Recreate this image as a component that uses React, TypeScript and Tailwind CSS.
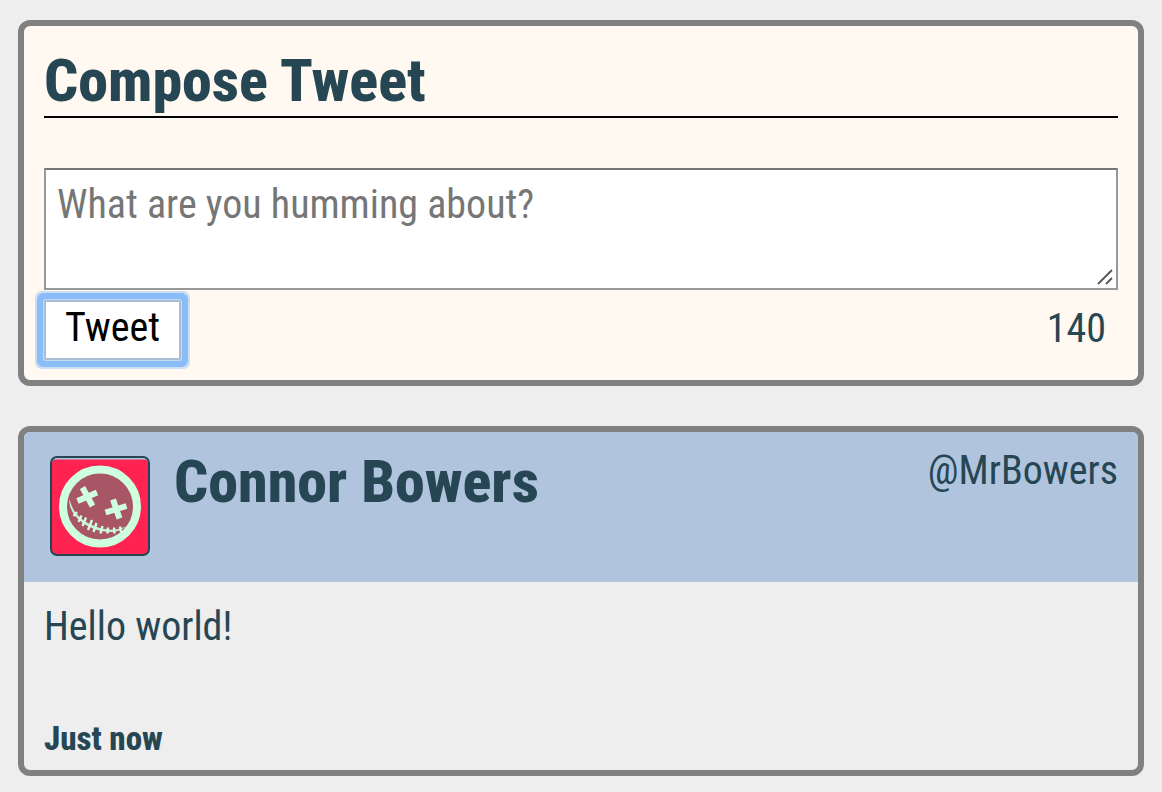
function Avatar() {
  return (
    <svg viewBox="0 0 100 100" className="mt-[10px] size-[100px] shrink-0" role="img" aria-label="Avatar">
      <rect x="1" y="1" width="98" height="98" rx="6" fill="#b0c4de" />
      <rect x="2" y="3.5" width="96" height="95" rx="4" fill="#ff2351" />
      <circle cx="50" cy="50.5" r="37" fill="#a85565" stroke="#ceffdf" strokeWidth="8" />
      <g stroke="#ceffdf" strokeWidth="6" fill="none">
        <path d="M32.5 31.5 42.5 50M47 36.5 27.5 45" />
        <path d="M63 43.5 69.5 62.5M76.5 50 55.5 56.5" />
      </g>
      <path d="M19.5 43C22 53 26 58.5 33 64C40 69 50 73 61.5 73.8C66 74 71 72.5 76 70.5C71 74.5 66 76 61 76C50 76 39 72 31.5 66C25 61 18.5 53 19.5 43Z" fill="#ceffdf" opacity="0.9" />
      <g fill="none" stroke="#ceffdf" strokeWidth="2.4">
        <path d="M27 56 23.5 60M31.5 59.5 28.5 66M36 61.5 32.5 70M42 64 38 74M46.5 67 43.5 76M52.5 70 50.5 77.5M58 71.5 57.5 77.5M64 71.5 64.5 77.5M70 70.5 71 76" />
      </g>
      <rect x="1" y="1" width="98" height="98" rx="6" fill="none" stroke="#254650" strokeWidth="2" />
    </svg>
  );
}

export default function App() {
  return (
    <div className="min-h-screen bg-[#eee] px-[18px] pt-5 pb-4 font-['Roboto_Condensed','Roboto',sans-serif] text-[40px] leading-[50px] text-[#264653]">
      <main className="flex flex-col gap-10">
        <section className="rounded-xl border-6 border-[#808080] bg-[#fff9f1] p-5">
          <h2 className="mb-[50px] border-b-2 border-black text-[60px] leading-[70px] font-extrabold">Compose Tweet</h2>
          <form onSubmit={(e) => e.preventDefault()}>
            <div className="relative">
              <textarea
                aria-label="Tweet text"
                placeholder="What are you humming about?"
                className="block h-[122px] w-full resize-none border-2 border-[#999] border-t-[#767676] bg-white px-[11px] py-[10px] outline-none placeholder:text-[#767676]"
              />
              <svg viewBox="0 0 16 16" className="pointer-events-none absolute right-[5px] bottom-[5px] size-4" fill="none" stroke="#555" strokeWidth="1.8" aria-hidden="true">
                <path d="M1 15 15 1M9 15 15 9" />
              </svg>
            </div>
            <div className="mt-[10px] flex items-start justify-between">
              <button
                type="submit"
                className="h-[60px] rounded-[2px] border-2 border-[#a9bdd6] bg-white px-[19px] pb-1 leading-[52px] text-black shadow-[0_0_0_1px_#c3daf1,0_0_0_7px_#8abdf7,0_0_0_9px_#cbdff2]"
              >
                Tweet
              </button>
              <output className="pt-1 pr-3">140</output>
            </div>
          </form>
        </section>

        <article className="overflow-hidden rounded-xl border-6 border-[#808080]">
          <header className="flex h-[150px] items-start bg-[#b0c4de] pt-[14px] pr-5 pl-[26px]">
            <Avatar />
            <h2 className="ml-6 grow text-[60px] leading-[72px] font-extrabold">Connor Bowers</h2>
            <span>@MrBowers</span>
          </header>
          <p className="px-5 pt-5">Hello world!</p>
          <footer className="px-5 pt-[68px] pb-3 text-[33px] leading-[38px] font-extrabold">Just now</footer>
        </article>
      </main>
    </div>
  );
}
